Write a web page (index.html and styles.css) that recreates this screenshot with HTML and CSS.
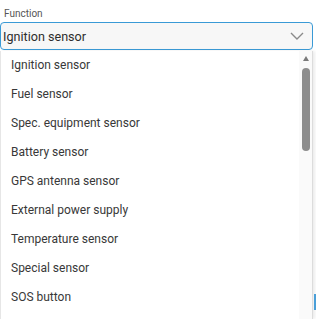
FILE: index.html
```html
<!DOCTYPE html>
<html lang="en">
<head>
  <meta charset="UTF-8" />
  <title>Function select</title>
  <link rel="stylesheet" href="styles.css">
</head>
<body>
  <div class="field">
    <label class="field-label">Function</label>
    <div class="select">
      <span class="select-value">Ignition sensor</span>
      <svg class="chevron" width="14" height="8" viewBox="0 0 14 8">
        <path d="M1 1 L7 7 L13 1" fill="none" stroke="#8a8a8a" stroke-width="1.4" />
      </svg>
    </div>
    <div class="dropdown">
      <ul class="options">
        <li>Ignition sensor</li>
        <li>Fuel sensor</li>
        <li>Spec. equipment sensor</li>
        <li>Battery sensor</li>
        <li>GPS antenna sensor</li>
        <li>External power supply</li>
        <li>Temperature sensor</li>
        <li>Special sensor</li>
        <li>SOS button</li>
      </ul>
      <div class="scrollbar">
        <div class="scroll-arrow"></div>
        <div class="scroll-thumb"></div>
      </div>
    </div>
  </div>
  <div class="behind"></div>
</body>
</html>
```

FILE: styles.css
```css
body {
  margin: 0;
  font-family: Roboto, "Liberation Sans", sans-serif;
  background: #fff;
  color: #333;
  overflow: hidden;
  height: 319px;
  position: relative;
}

.field {
  width: 313px;
  padding-top: 8px;
}

.field-label {
  display: block;
  font-size: 10px;
  line-height: 12px;
  color: #555;
  padding-left: 4px;
  margin-bottom: 2px;
}

.select {
  height: 26px;
  border: 1px solid #3a9ad6;
  border-radius: 4px;
  background: #f7f7f7;
  display: flex;
  align-items: center;
  justify-content: space-between;
  padding: 0 8px 0 2px;
}

.select-value {
  font-size: 12.6px;
  color: #2e2e2e;
}

.chevron {
  display: block;
}

.dropdown {
  margin-top: 1px;
  height: 268px;
  display: flex;
  background: #fff;
  border-left: 1px solid #e6e6e6;
  border-right: 1px solid #dcdcdc;
  box-shadow: 2px 0 3px rgba(0, 0, 0, 0.08);
}

.options {
  list-style: none;
  margin: 0;
  padding: 0;
  flex: 1;
}

.options li {
  height: 29px;
  line-height: 29px;
  padding-left: 10px;
  font-size: 12px;
  color: #383838;
}

.scrollbar {
  width: 13px;
  background: #fafafa;
  display: flex;
  flex-direction: column;
  align-items: center;
  padding-top: 5px;
}

.scroll-arrow {
  width: 0;
  height: 0;
  border-left: 3.5px solid transparent;
  border-right: 3.5px solid transparent;
  border-bottom: 5px solid #7a7a7a;
}

.scroll-thumb {
  width: 8px;
  height: 83px;
  margin-top: 7px;
  border-radius: 4px;
  background: #8d8d8d;
}

.behind {
  position: absolute;
  left: 314px;
  top: 294px;
  width: 2px;
  height: 16px;
  background: #4a9fd8;
}
```
